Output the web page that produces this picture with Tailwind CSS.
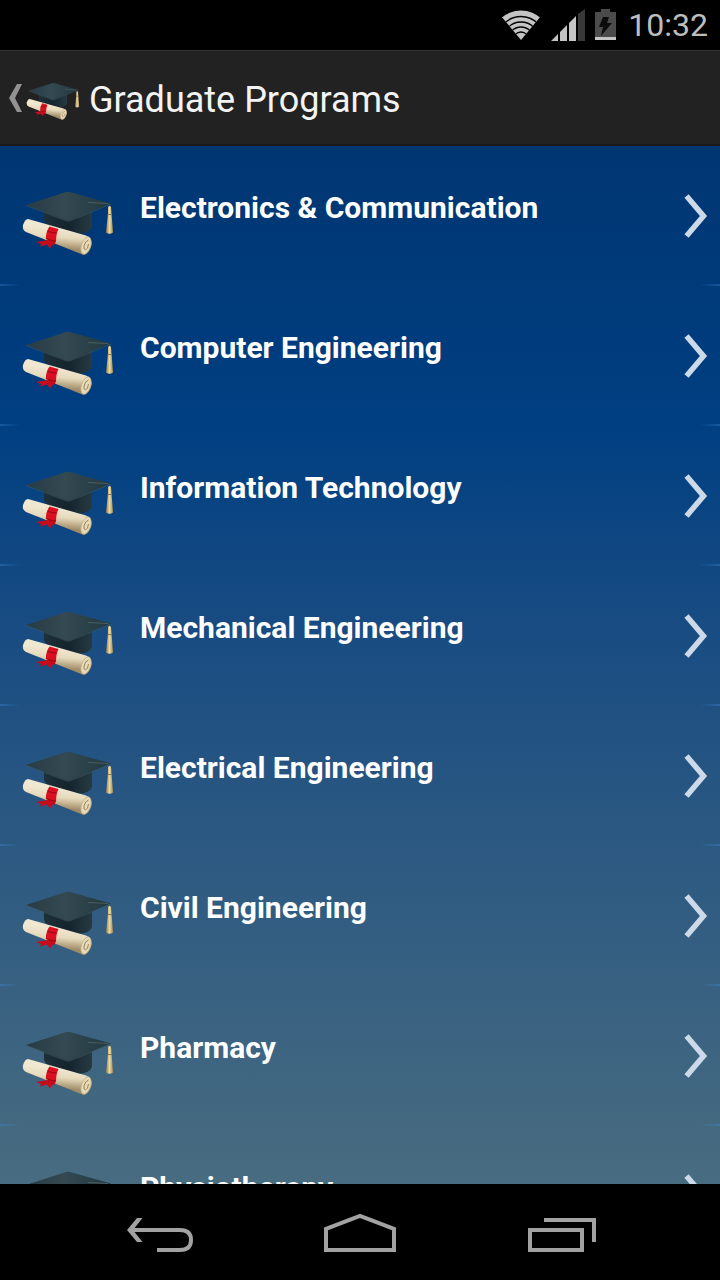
<!DOCTYPE html>
<html lang="en">
<head>
<meta charset="utf-8">
<meta name="viewport" content="width=device-width, initial-scale=1">
<title>Graduate Programs</title>
<script src="https://cdn.jsdelivr.net/npm/@tailwindcss/browser@4"></script>
</head>
<body class="flex h-screen flex-col overflow-hidden bg-black font-['Roboto','Liberation_Sans',sans-serif]">

<!-- Shared drawings -->
<svg class="absolute size-0" aria-hidden="true">
  <defs>
    <linearGradient id="board" x1="0" y1="0" x2="1" y2="0"><stop offset="0" stop-color="#263b44"/><stop offset=".45" stop-color="#344951"/><stop offset="1" stop-color="#213942"/></linearGradient>
    <linearGradient id="base" x1="0" y1="0" x2="1" y2="0"><stop offset="0" stop-color="#1d3039"/><stop offset=".5" stop-color="#15242c"/><stop offset="1" stop-color="#263a42"/></linearGradient>
    <linearGradient id="paper" x1=".55" y1="0" x2=".38" y2="1"><stop offset=".25" stop-color="#f1e8d2"/><stop offset=".5" stop-color="#e6dabc"/><stop offset=".8" stop-color="#a08c68"/></linearGradient>
    <linearGradient id="gold" x1="0" y1="0" x2="1" y2="0"><stop offset="0" stop-color="#8f7c50"/><stop offset=".5" stop-color="#ead8a2"/><stop offset="1" stop-color="#a88f55"/></linearGradient>
  </defs>
  <symbol id="cap" viewBox="12 10 92 67">
    <path d="M34 30 L82 30 V47 Q80 53 68 54 L44 50 Q35 44 34 40Z" fill="url(#base)"/>
    <path d="M16 25 L56 12 Q58 11.500 61 12.200 L101 23.500 L61 40 Q58 41.500 55 40Z" fill="url(#board)"/>
    <path d="M16 25.500 L55 40.500 Q58 42 61 40.500 L101 24" fill="none" stroke="#40555a" stroke-width=".6"/>
    <path d="M78 22.500 L98 23.500 Q100 25 99.500 31" fill="none" stroke="#56655f" stroke-width=".8"/>
    <path d="M98 27 Q100 25 101 27 L101.500 33 L103 52.500 Q99.500 55 96 52.500 L98 33Z" fill="url(#gold)"/>
    <path d="M97.500 34.500 H102" stroke="#8a7544" stroke-width="1"/>
    <path d="M18 39 L86 57 H78 Q82 59 81.500 66 Q79 75 73 75 L16 52 Q12 50 13 45 Q15 39 18 39Z" fill="none"/>
    <path d="M18 39 L76 55.500 Q82 58 81.500 65 Q79 75 73 74.800 L16 52 Q12 50 13 45 Q15 39 18 39Z" fill="url(#paper)"/>
    <ellipse cx="76" cy="65.500" rx="4.500" ry="9" transform="rotate(18 76 65.500)" fill="#e6dab9" stroke="#c3b38b" stroke-width=".7"/>
    <path d="M78.500 60 Q75 61 74 66 Q73.500 70 75.500 70 Q78 69 78.500 64" fill="none" stroke="#9c8558" stroke-width="1"/>
    <path d="M38 60 L26 62 L31 64 L30 66.500 L37 64.500 L40 68.500 L42 65.500 L45 64 L46 60Z" fill="#c50b1c"/>
    <path d="M39.500 46.500 L48.500 49 Q46 54 46 62 L36 59 Q35.500 52 39.500 46.500Z" fill="#d90f22"/>
    <path d="M37.500 51 Q41 53 46 53 M36 58.500 Q40 60.500 45.500 61" fill="none" stroke="#970716" stroke-width="1"/>
  </symbol>
  <symbol id="next" viewBox="0 0 24 44">
    <path d="M2.500 2 L19.500 22 L2.500 42" fill="none" stroke="#ccd9e8" stroke-width="5.500"/>
  </symbol>
</svg>

<!-- Status bar -->
<div class="flex h-[50px] shrink-0 items-center justify-end pr-3 text-[#bebebe]">
  <svg class="mr-2 h-8 w-10" viewBox="0 0 40 32" role="img" aria-label="Wi-Fi">
    <defs><clipPath id="fan"><path d="M19 31 L-1 7 V0 H39 V7Z"/></clipPath></defs>
    <g clip-path="url(#fan)">
      <circle cx="19" cy="31" r="29.500" fill="#c4c4c4"/>
      <g fill="none" stroke="#000" stroke-width="1.300"><circle cx="19" cy="31" r="8"/><circle cx="19" cy="31" r="13"/><circle cx="19" cy="31" r="18"/><circle cx="19" cy="31" r="23.500"/></g>
    </g>
  </svg>
  <svg class="mr-2 h-8 w-9" viewBox="0 0 36 32" role="img" aria-label="Signal strength">
    <path d="M1 32 L8 25 V32Z M10 23 L17 16 V32 H10Z M19 14 L26 7 V32 H19Z" fill="#c4c4c4"/>
    <path d="M28 5 L35 0 V32 H28Z" fill="#383838"/>
  </svg>
  <svg class="mr-3 h-8 w-[22px]" viewBox="0 0 22 32" role="img" aria-label="Battery charging">
    <path d="M7 0 H16 V3 H22 V28 H1 V3 H7Z" fill="#4b4b4b"/>
    <path d="M1 28 H22 V31 H1Z" fill="#c4c4c4"/>
    <path d="M9 8 H15 L13 14 H18 L7 27 L9 18 H5Z" fill="#0c0c0c"/>
  </svg>
  <time class="text-[32px] leading-none">10:32</time>
</div>

<!-- Action bar -->
<header class="flex h-24 shrink-0 items-center border-t border-b-2 border-t-[#343434] border-b-[#1a1a1a] bg-[#222222] pl-2">
  <button type="button" class="flex items-center" aria-label="Navigate up">
    <svg class="h-7 w-[18px]" viewBox="0 0 18 28"><path d="M9 0 H14 L7 14 L14 28 H9 L1 14Z" fill="#929292"/></svg>
    <svg class="mt-2 h-[39px] w-[54px]"><use href="#cap"/></svg>
  </button>
  <h1 class="ml-[9px] pt-1 text-[36px] leading-none text-[#f3f3f3]">Graduate Programs</h1>
</header>

<!-- Program list -->
<main class="min-h-0 flex-1 overflow-y-auto bg-linear-to-b from-[#003672] from-0% via-[#003f82] via-27% to-[#486c80] to-100% [scrollbar-width:none]">
  <ul id="programs"></ul>
</main>

<template id="row">
  <li>
    <a href="#" class="flex h-[138px] items-start pl-[22px] pr-3">
      <svg class="mt-11 h-[67px] w-[92px] shrink-0" aria-hidden="true"><use href="#cap"/></svg>
      <span class="ml-[26px] mt-11 flex-1 text-[30px] leading-9 font-bold text-white"></span>
      <svg class="mt-12 h-11 w-6 shrink-0" aria-hidden="true"><use href="#next"/></svg>
    </a>
    <div class="flex h-[2px] justify-between">
      <i class="w-5 bg-linear-to-r from-[#3f8dde]/35 to-transparent"></i>
      <i class="w-5 bg-linear-to-l from-[#3f8dde]/35 to-transparent"></i>
    </div>
  </li>
</template>

<!-- Navigation bar -->
<nav class="flex h-24 shrink-0 items-center justify-center gap-[130px] bg-black">
  <button type="button" aria-label="Back">
    <svg class="h-10 w-[72px]" viewBox="0 0 72 40" fill="none" stroke="#a2a2a2" stroke-width="4"><path d="M8 18 H58 Q69 18 69 28 Q69 38 58 38 H35"/><path d="M15 6 H20.500 L11 18 L20.500 30 H15 L5 18Z" fill="#a2a2a2" stroke="none"/></svg>
  </button>
  <button type="button" aria-label="Home">
    <svg class="h-10 w-[72px]" viewBox="0 0 72 40" fill="none" stroke="#a2a2a2" stroke-width="4"><path d="M2 38 V17 L36 4 L70 17 V38Z"/></svg>
  </button>
  <button type="button" aria-label="Recent apps">
    <svg class="h-10 w-[72px]" viewBox="0 0 72 40" fill="none" stroke="#a2a2a2" stroke-width="4"><path d="M4 18 H56 V38 H4Z M18 8 H68 V30"/></svg>
  </button>
</nav>

<script>
  const programs = ["Electronics & Communication", "Computer Engineering", "Information Technology", "Mechanical Engineering", "Electrical Engineering", "Civil Engineering", "Pharmacy", "Physiotherapy"];
  const list = document.getElementById("programs");
  const row = document.getElementById("row");
  for (const name of programs) {
    const item = row.content.cloneNode(true);
    item.querySelector("span").textContent = name;
    list.append(item);
  }
</script>
</body>
</html>
